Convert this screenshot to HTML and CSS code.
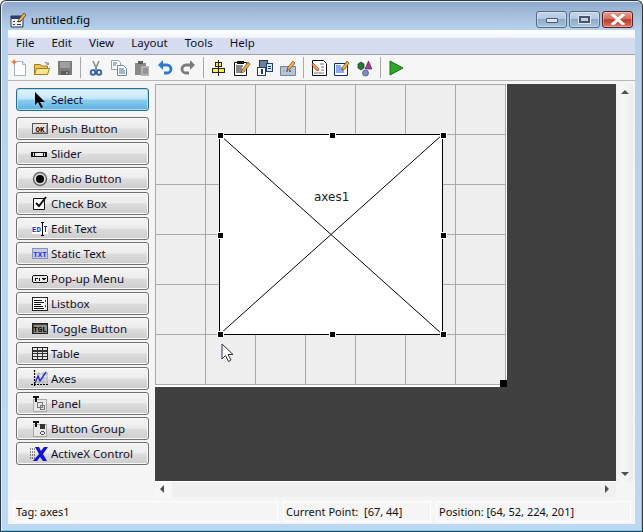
FILE: index.html
```html
<!DOCTYPE html>
<html lang="en">
<head>
    <meta charset="UTF-8">
    <title>untitled.fig</title>
    <link rel="stylesheet" href="styles.css">
</head>
<body>

<div class="window">
    <div class="titlebar">
        <svg class="title-icon" width="17" height="17" viewBox="0 0 17 17"><path d="M1 5h12v11H1z" fill="#eef0f6" stroke="#2a3350"/><path d="M1 5h12v3H1z" fill="#2a3f70"/><path d="M3 10h2v1H3zM3 13h2v1H3zM7 10h4v1H7zM7 13h4v1H7z" fill="#2a3350"/><path d="M9 8l5-6 2 2-5 6-3 1z" fill="#e8b84a" stroke="#5a3a20" stroke-width=".8"/></svg>
        <span class="title-text">untitled.fig</span>
        <div class="caption">
            <div class="cap-btn"><span class="cap-min"></span></div>
            <div class="cap-btn"><span class="cap-max"></span></div>
            <div class="cap-btn cap-close">
                <svg width="14" height="11" viewBox="0 0 14 11"><path d="M2 1l10 9M12 1L2 10" stroke="#fff" stroke-width="3" stroke-linecap="square" fill="none"/></svg>
            </div>
        </div>
    </div>

    <div class="client">
        <div class="menubar">
            <span>File</span><span>Edit</span><span>View</span><span>Layout</span><span>Tools</span><span>Help</span>
        </div>

        <div class="toolbar">
            <svg class="tool" viewBox="0 0 16 16"><path d="M3.500 1.500h8l3 3v11h-11z" fill="#fff" stroke="#9fb4cc"/><path d="M11.500 1.500v3h3" fill="#dfe8f2" stroke="#9fb4cc"/><path d="M3 -1l1 2 2 1-2 1-1 2-1-2-2-1 2-1z" fill="#f2703c"/></svg>
            <svg class="tool" viewBox="0 0 16 16"><path d="M.5 4.500h6l1 1.500h6v8.500H.5z" fill="#eec65a" stroke="#a07c28"/><path d="M.5 14.500l2-6h13l-2 6z" fill="#fbe68e" stroke="#a07c28"/><path d="M10 3q2-2 4 0l1-1v3h-3l1-1q-1-1-3-1z" fill="#7f99b5"/></svg>
            <svg class="tool" viewBox="0 0 16 16"><path d="M1 1h14v14H1z" fill="#7b7b7b"/><path d="M3 2h10v6H3z" fill="#a0a0a0"/><path d="M4 11h8v4H4z" fill="#5c5c5c"/><path d="M9 12h2v2H9z" fill="#999"/></svg>
            <span class="tool-sep"></span>
            <svg class="tool" viewBox="0 0 16 16"><path d="M5 1l4 9M11 1L7 10" stroke="#7b8794" stroke-width="1.500" fill="none"/><circle cx="5" cy="12.500" r="2.300" fill="none" stroke="#2b5fb0" stroke-width="1.800"/><circle cx="11" cy="12.500" r="2.300" fill="none" stroke="#2b5fb0" stroke-width="1.800"/></svg>
            <svg class="tool" viewBox="0 0 16 16"><path d="M.5.500h7l2 2v7h-9z" fill="#fff" stroke="#8ba1bb"/><path d="M6.500 5.500h6l3 3v7h-9z" fill="#fff" stroke="#6c86a8"/><path d="M2 3h4M2 5h3M8 9h5M8 11h6M8 13h6" stroke="#4a6fa5"/></svg>
            <svg class="tool" viewBox="0 0 16 16"><path d="M1 3h11v12H1z" fill="#8a8a8a"/><path d="M4 1h5v3H4z" fill="#5f5f5f"/><path d="M7 6h8v10H7z" fill="#b4b4b4"/><path d="M9 9h5M9 11h5M9 13h5" stroke="#777"/></svg>
            <svg class="tool" viewBox="0 0 16 16"><path d="M5 5h5a3.500 3.500 0 0 1 0 8H7" fill="none" stroke="#2c79d4" stroke-width="2.800"/><path d="M6 0v10L1 5z" fill="#2c79d4"/></svg>
            <svg class="tool" viewBox="0 0 16 16"><path d="M11 5H6a3.500 3.500 0 0 0 0 8h3" fill="none" stroke="#7a7a7a" stroke-width="2.800"/><path d="M10 0v10l5-5z" fill="#7a7a7a"/></svg>
            <span class="tool-sep"></span>
            <svg class="tool" viewBox="0 0 16 16" shape-rendering="crispEdges"><path d="M4.500 2.500h6v4h-6zM1.500 8.500h12v4h-12z" fill="#ffee33" stroke="#222"/><path d="M7 0h1v16H7z" fill="#222"/></svg>
            <svg class="tool" viewBox="0 0 16 16"><path d="M.5 2.500h12v13H.5z" fill="#fff" stroke="#111"/><path d="M3 1h7v3H3z" fill="#111"/><path d="M2 6h7M2 8h6M2 10h8M2 12h6" stroke="#111"/><path d="M8 10l6-8 2 2-6 8-3 1z" fill="#e9b34a" stroke="#6b3f14" stroke-width=".7"/></svg>
            <svg class="tool" viewBox="0 0 16 16" shape-rendering="crispEdges"><path d="M2.500.500h8v7h-8z" fill="#6c7f9c" stroke="#333"/><path d="M9.500 3.500h6v8h-6z" fill="#dbe6f5" stroke="#1c3d7a"/><path d="M.5 7.500h8v8h-8z" fill="#fff" stroke="#1c3d7a"/><path d="M4 9h2v5H4zM11 6h3v1h-3zM11 8h3v1h-3z" fill="#1c3d7a"/></svg>
            <svg class="tool" viewBox="0 0 16 16"><path d="M.5 6.500h15v9H.5z" fill="#b6c4d8" stroke="#6f84a3"/><path d="M3 10h2v2H3z" fill="#e2b23c"/><path d="M6 10h2v2H6z" fill="#5a86c8"/><path d="M9 10h2v2H9z" fill="#6d6d6d"/><path d="M8 7l5-6 2 2-5 6-3 1z" fill="#e9b34a" stroke="#7a3c20" stroke-width=".7"/></svg>
            <span class="tool-sep"></span>
            <svg class="tool" viewBox="0 0 16 16"><path d="M1.500.500h11l3 3v12h-14z" fill="#fff" stroke="#111"/><path d="M9 4h4M10 7h3M10 10h3M3 13h10" stroke="#777"/><path d="M2 3l6 6-1 2-2-1-4-5z" fill="#eda24a" stroke="#a33" stroke-width=".7"/></svg>
            <svg class="tool" viewBox="0 0 16 16"><path d="M.5 3.500h13v12H.5z" fill="#fff" stroke="#0c2c78"/><path d="M2 6h5M2 8h7M2 10h8M2 12h8" stroke="#1a4fd8"/><path d="M8 8l5-7 2 2-4 6-3 1z" fill="#e9b34a" stroke="#6b3f14" stroke-width=".7"/></svg>
            <svg class="tool" viewBox="0 0 16 16"><path d="M1 4l3-2 3 2v4l-3 2-3-2z" fill="#1f7a35" stroke="#111" stroke-width=".6"/><path d="M11.500 1L15 9H8z" fill="#a63a8c" stroke="#4b1d44" stroke-width=".6"/><circle cx="8.500" cy="13" r="3" fill="#7a8fc8" stroke="#2b3b70" stroke-width=".6"/></svg>
            <span class="tool-sep"></span>
            <svg class="tool" viewBox="0 0 16 16"><path d="M2 1l13 7-13 7z" fill="#2fa52a" stroke="#1c6e1c"/></svg>
        </div>

        <div class="main">
            <div class="palette">
                <div class="pal-btn pal-active">
                    <svg class="pal-icon" viewBox="0 0 16 16"><path d="M3 0v13l3-3 3 6 2-1-3-5h5z" fill="#000"/></svg>Select
                </div>
                <div class="pal-btn">
                    <svg class="pal-icon" viewBox="0 0 16 16" shape-rendering="crispEdges"><path d="M.5 2.500h15v10H.5z" fill="#e4e4e4" stroke="#555"/><path d="M14 4h1v8H2v-1h12z" fill="#999"/><text x="8" y="10.500" class="glyph" fill="#000">OK</text></svg>Push Button
                </div>
                <div class="pal-btn">
                    <svg class="pal-icon" viewBox="0 0 16 16" shape-rendering="crispEdges"><path d="M-.5 6.500h15v4h-15z" fill="#ddd" stroke="#111"/><path d="M0 7h1v3H0zM2 7h1v3H2zM11 7h1v3h-1zM13 7h1v3h-1z" fill="#111"/><path d="M4 7h6v3H4z" fill="#eee"/></svg>Slider
                </div>
                <div class="pal-btn">
                    <svg class="pal-icon" viewBox="0 0 16 16"><circle cx="8" cy="8" r="6.500" fill="#ddd" stroke="#666" stroke-width="1.400"/><circle cx="8" cy="8" r="4" fill="#000"/></svg>Radio Button
                </div>
                <div class="pal-btn">
                    <svg class="pal-icon" viewBox="0 0 16 16"><path d="M1.500 2.500h11v11h-11z" fill="#fff" stroke="#111"/><path d="M4 7l3 3 7-9" fill="none" stroke="#111" stroke-width="2"/></svg>Check Box
                </div>
                <div class="pal-btn">
                    <svg class="pal-icon" viewBox="0 0 16 16" shape-rendering="crispEdges"><path d="M0 3h16v10H0z" fill="#fff"/><text x="4.500" y="10.500" class="glyph" fill="#1c2fe0">ED</text><path d="M9 1h3v1h-1v12h1v1H9v-1h1V2H9z" fill="#000"/><path d="M12 5h3v1h-1v5h-1V6h-1z" fill="#1c2fe0"/></svg>Edit Text
                </div>
                <div class="pal-btn">
                    <svg class="pal-icon" viewBox="0 0 16 16" shape-rendering="crispEdges"><path d="M.5 2.500h15v10H.5z" fill="#c4cce8" stroke="#8892b8"/><text x="8" y="10.500" class="glyph" fill="#1c2fe0">TXT</text></svg>Static Text
                </div>
                <div class="pal-btn">
                    <svg class="pal-icon" viewBox="0 0 16 16" shape-rendering="crispEdges"><path d="M1 4h14v1H1zM1 11h14v1H1zM0 5h1v6H0zM15 5h1v6h-1z" fill="#111"/><path d="M1 5h14v6H1z" fill="#e8e8e8"/><path d="M3 7h3v1H3zM3 8h1v2H3zM7 7h1v3H7zM10 7h4v1h-4zM11 8h2v1h-2z" fill="#111"/></svg>Pop-up Menu
                </div>
                <div class="pal-btn">
                    <svg class="pal-icon" viewBox="0 0 16 16" shape-rendering="crispEdges"><path d="M.5 1.500h15v13H.5z" fill="#fff" stroke="#222"/><path d="M2 4h8v1H2zM2 6h10v1H2zM2 8h7v1H2zM2 10h9v1H2zM2 12h10v1H2z" fill="#111"/><path d="M13 2h1v12h-1z" fill="#ddd"/><path d="M13 4h1v2h-1zM13 9h1v2h-1z" fill="#1c2fe0"/></svg>Listbox
                </div>
                <div class="pal-btn">
                    <svg class="pal-icon" viewBox="0 0 16 16" shape-rendering="crispEdges"><path d="M.5 2.500h15v10H.5z" fill="#8c8c8c" stroke="#222"/><path d="M1 3h14v1H1zM1 3h1v9H1z" fill="#444"/><text x="8" y="10.500" class="glyph" fill="#000">TGL</text></svg>Toggle Button
                </div>
                <div class="pal-btn">
                    <svg class="pal-icon" viewBox="0 0 16 16" shape-rendering="crispEdges"><path d="M.5 1.500h15v12H.5z" fill="#e6e6e6" stroke="#222"/><path d="M1 4h14v2H1zM1 7h14v1H1zM1 10h14v1H1zM5 2h1v11H5zM10 2h1v11h-1z" fill="#333"/></svg>Table
                </div>
                <div class="pal-btn">
                    <svg class="pal-icon" viewBox="0 0 16 16"><path d="M3 3h13M3 7h13M3 11h13M7 1v12M11 1v12M15 1v12" stroke="#aaa" stroke-width=".8"/><path d="M2.500 -1v16M-1 13.500h17" stroke="#000" stroke-width="1.200" stroke-dasharray="2 1"/><path d="M3 12l3-7 2 5 6-9" fill="none" stroke="#1c2fe0" stroke-width="1.400"/></svg>Axes
                </div>
                <div class="pal-btn">
                    <svg class="pal-icon" viewBox="0 0 16 16" shape-rendering="crispEdges"><path d="M1.500 3.500h13v12h-13z" fill="#e8e8e8" stroke="#aaa"/><path d="M1 0h6v2H5v4H3V2H1z" fill="#111"/><path d="M5.500 6.500h5v5h-5zM8.500 9.500h4v4h-4z" fill="none" stroke="#777"/></svg>Panel
                </div>
                <div class="pal-btn">
                    <svg class="pal-icon" viewBox="0 0 16 16" shape-rendering="crispEdges"><path d="M1.500 3.500h13v12h-13z" fill="#e8e8e8" stroke="#aaa"/><path d="M1 0h6v2H5v4H3V2H1z" fill="#111"/><path d="M8 3h5v5H8z" fill="#333"/><path d="M9 10h3v1H9zM8 11h1v2H8zM12 11h1v2h-1zM9 13h3v1H9z" fill="#555"/></svg>Button Group
                </div>
                <div class="pal-btn">
                    <svg class="pal-icon" viewBox="0 0 16 16"><path d="M-2 3h5M-2 6h5M-2 9h5M-2 12h5" stroke="#222" stroke-dasharray="1 1"/><path d="M3 1h4l2 4 3-4h4l-5 7 4 7h-4l-3-4-3 4H1l6-7z" fill="#1212d0"/></svg>ActiveX Control
                </div>
            </div>

            <div class="canvas-area">
                <div class="canvas-row">
                    <div class="view">
                        <div class="figure">
                            <div class="axes">
                                <svg class="axes-cross" viewBox="0 0 222 200" preserveAspectRatio="none"><path d="M0 0L222 200M222 0L0 200" stroke="#000" fill="none"/></svg>
                                <span class="axes-label">axes1</span>
                            </div>
                            <span class="handle h-tl"></span><span class="handle h-tc"></span><span class="handle h-tr"></span>
                            <span class="handle h-ml"></span><span class="handle h-mr"></span>
                            <span class="handle h-bl"></span><span class="handle h-bc"></span><span class="handle h-br"></span>
                            <span class="resize-grip"></span>
                            <svg class="pointer" width="14" height="20" viewBox="0 0 14 20"><path d="M1 1v15l3.500-3.500 3 6 2.500-1.500-3-5.500h5z" fill="#fff" stroke="#2a2f45" stroke-width="1"/></svg>
                        </div>
                    </div>
                    <div class="vscroll">
                        <span class="arrow arrow-up"></span>
                        <span class="arrow arrow-down"></span>
                    </div>
                </div>
                <div class="hscroll">
                    <div class="hscroll-btn"><span class="arrow arrow-left"></span></div>
                    <span class="arrow arrow-right"></span>
                </div>
            </div>
        </div>

        <div class="statusbar">
            <div class="cell cell-tag">Tag: axes1</div>
            <div class="cell cell-point">Current Point:&nbsp; [67, 44]</div>
            <div class="cell cell-pos">Position: [64, 52, 224, 201]</div>
        </div>
    </div>
</div>

</body>
</html>
```

FILE: styles.css
```css
html, body { margin: 0; padding: 0; }
body { width: 643px; height: 532px; overflow: hidden; background: #fff; font-family: "Noto Sans", "Open Sans", Arial, sans-serif; font-size: 11.5px; color: #111; }

.window { width: 643px; height: 532px; box-sizing: border-box; display: flex; flex-direction: column; border: 1px solid #2d3a46; border-bottom-color: #1f4a63; border-radius: 6px 6px 0 0; background: linear-gradient(to bottom, #8ea8ca 0, #a2bbd9 12px, #b6d1ec 28px, #bcd8f2 100%); padding: 0 7px 7px 7px; box-shadow: inset 1px 1px 0 #e4eef8, inset -1px -1px 0 #6fcdf0; }

.titlebar { height: 29px; box-sizing: border-box; padding-top: 7px; display: flex; align-items: center; flex: none; }
.title-icon { margin-left: 2px; flex: none; }
.title-text { margin-left: 4px; font-size: 11.5px; color: #000; }
.caption { margin-left: auto; margin-right: 2px; display: flex; gap: 2px; }
.cap-btn { width: 31px; height: 17px; box-sizing: border-box; border: 1px solid #53698a; border-radius: 3px; display: flex; align-items: center; justify-content: center; background: linear-gradient(to bottom, #c3d6ea 0, #b3c9e0 45%, #8aa8c6 50%, #a9c4dc 100%); box-shadow: inset 0 0 0 1px rgba(255,255,255,.35); }
.cap-min { width: 10px; height: 3px; margin-top: 3px; background: #dfe5ee; border: 1px solid #465570; border-radius: 1px; }
.cap-max { width: 7px; height: 3px; background: #c6d3e4; border: 2px solid #465570; outline: 1px solid #dfe5ee; }
.cap-close { background: linear-gradient(to bottom, #e0a193 0, #d2705f 45%, #b93a2c 52%, #d67a6a 100%); border-color: #5c1c24; }

.client { flex: 1; display: flex; flex-direction: column; background: #f5f5f5; min-height: 0; }

.menubar { height: 25px; box-sizing: border-box; flex: none; display: flex; align-items: center; padding-left: 8px; gap: 17px; background: linear-gradient(to bottom, #ffffff 0, #f3f5fb 30%, #d7ddf0 35%, #d5dcef 100%); border-bottom: 1px solid #a0a0a8; color: #14102a; }

.toolbar { height: 26px; box-sizing: border-box; flex: none; display: flex; align-items: center; gap: 7px; padding-left: 3px; background: #f6f6f6; border-bottom: 1px solid #b4b4b4; }
.tool { width: 16px; height: 16px; flex: none; overflow: visible; }
.tool-sep { width: 1px; height: 21px; background: #a8a8a8; flex: none; }

.main { flex: 1; display: flex; min-height: 0; }

.palette { width: 147px; flex: none; box-sizing: border-box; padding: 7px 6px 0 8px; display: flex; flex-direction: column; gap: 2px; }
.pal-btn { height: 23px; box-sizing: border-box; flex: none; display: flex; align-items: center; gap: 3px; padding-left: 15px; border: 1px solid #707070; border-radius: 3px; background: linear-gradient(to bottom, #f4f4f4 0, #ececec 48%, #dcdcdc 52%, #cdcdcd 100%); box-shadow: inset 0 0 0 1px #fafafa; color: #14102a; white-space: nowrap; }
.pal-active { margin-bottom: 4px; border-color: #2c6d92; background: linear-gradient(to bottom, #e4f4fc 0, #bfe6fa 48%, #8ccdf0 52%, #5fb0dd 100%); box-shadow: inset 0 0 0 1px #a8dcf2; }
.pal-icon { width: 16px; height: 16px; flex: none; overflow: visible; }
.glyph { font-family: "Liberation Mono", monospace; font-size: 7.5px; font-weight: bold; text-anchor: middle; }

.canvas-area { flex: 1; display: flex; flex-direction: column; padding-top: 3px; margin-right: 2px; }
.canvas-row { display: flex; height: 398px; flex: none; }
.view { width: 461px; flex: none; background: #404040; border-bottom: 1px solid #fff; box-sizing: border-box; overflow: hidden; }
.vscroll { flex: 1; position: relative; background: linear-gradient(to right, #f0f0f0, #f6f6f6 40%, #ececec); }
.hscroll { width: 461px; height: 15px; position: relative; background: #f0f0f0; }
.hscroll-btn { position: absolute; left: 0; top: 0; width: 17px; height: 15px; background: #f8f8f8; }

.arrow { position: absolute; width: 0; height: 0; border-style: solid; border-color: transparent; }
.arrow-up { left: 5px; top: 6px; border-width: 0 4px 4px; border-bottom-color: #505050; }
.arrow-down { left: 5px; bottom: 6px; border-width: 4px 4px 0; border-top-color: #505050; }
.arrow-left { left: 5px; top: 3px; border-width: 4px 4px 4px 0; border-right-color: #505050; }
.arrow-right { right: 7px; top: 3px; border-width: 4px 0 4px 4px; border-left-color: #505050; }

/* the figure is a free canvas, its contents sit at figure coordinates */
.figure { position: relative; width: 352px; height: 303px; box-sizing: border-box; border-right: 1px solid #fff; border-bottom: 2px solid #fff; background-color: #eeeeee; background-image: linear-gradient(to right, #a9a9a9 1px, transparent 1px), linear-gradient(to bottom, #a9a9a9 1px, transparent 1px); background-size: 50px 50px; }
.axes { position: absolute; left: 64px; top: 50px; width: 224px; height: 201px; box-sizing: border-box; border: 1px solid #000; background: #fff; }
.axes-cross { position: absolute; left: 0; top: 0; width: 100%; height: 100%; }
.axes-label { position: absolute; left: 94px; top: 55px; font-family: "DejaVu Sans", sans-serif; font-size: 12px; color: #222; }
.handle { position: absolute; width: 5px; height: 5px; background: #000; outline: 1px solid #fff; }
.h-tl { left: 63px; top: 49px; }
.h-tc { left: 175px; top: 49px; }
.h-tr { left: 286px; top: 49px; }
.h-ml { left: 63px; top: 149px; }
.h-mr { left: 286px; top: 149px; }
.h-bl { left: 63px; top: 248px; }
.h-bc { left: 175px; top: 248px; }
.h-br { left: 286px; top: 248px; }
.resize-grip { position: absolute; left: 345px; top: 296px; width: 7px; height: 7px; background: #000; }
.pointer { position: absolute; left: 66px; top: 259px; }

.statusbar { height: 21px; flex: none; display: flex; gap: 5px; padding: 0 4px 2px 5px; margin-top: 4px; box-sizing: content-box; font-size: 11px; }
.cell { box-sizing: border-box; height: 21px; border: 1px solid #fff; display: flex; align-items: center; padding-left: 2px; white-space: nowrap; color: #111; }
.cell-tag { width: 265px; }
.cell-point { width: 148px; }
.cell-pos { width: 195px; }
```
